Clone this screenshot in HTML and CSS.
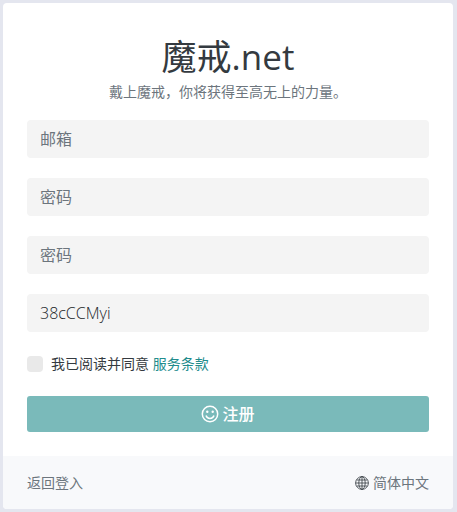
FILE: index.html
```html
<!DOCTYPE html>
<html lang="zh-CN">
<head>
<meta charset="utf-8">
<meta name="viewport" content="width=device-width, initial-scale=1">
<title>魔戒.net</title>
<link rel="stylesheet" href="styles.css">
</head>
<body>
<main class="card">
  <form class="card-body">
    <h1 class="brand">魔戒.net</h1>
    <p class="tagline">戴上魔戒，你将获得至高无上的力量。</p>
    <input class="field" type="email" placeholder="邮箱" aria-label="邮箱">
    <input class="field" type="password" placeholder="密码" aria-label="密码">
    <input class="field" type="password" placeholder="密码" aria-label="密码">
    <input class="field code" type="text" value="38cCCMyi" aria-label="38cCCMyi">
    <div class="terms">
      <input class="check" type="checkbox" id="terms">
      <label for="terms">我已阅读并同意 <a href="#">服务条款</a></label>
    </div>
    <button class="submit" type="submit">
      <svg class="icon" viewBox="0 0 18 18" aria-hidden="true"><circle cx="9" cy="9" r="7.7"/><path d="M5 10.5a4.2 4.2 0 0 0 8 0"/><circle class="eye" cx="6.3" cy="6.8" r="1.2"/><circle class="eye" cx="11.7" cy="6.8" r="1.2"/></svg>
      注册
    </button>
  </form>
  <footer class="card-footer">
    <a href="#">返回登入</a>
    <button class="language" type="button">
      <svg class="icon" viewBox="0 0 14 14" aria-hidden="true"><circle cx="7" cy="7" r="6.4"/><ellipse cx="7" cy="7" rx="3.2" ry="6.4"/><path d="M7 .6v12.8M.6 7h12.8M1.6 4h10.8M1.6 10h10.8"/></svg>
      简体中文
    </button>
  </footer>
</main>
</body>
</html>
```
FILE: styles.css
```css
* { box-sizing: border-box; }
body {
  margin: 0;
  padding: 3px 4px 3px 3px;
  background: #e4e6ef;
  color: #343a40;
  font: 14px/21px "Open Sans", "Noto Sans CJK SC", sans-serif;
}
a { color: inherit; text-decoration: none; }
button, input { font: inherit; margin: 0; border: 0; }
.card { background: #fff; border-radius: 4px; overflow: hidden; }
.card-body { padding: 32px 24px 24px; }
.brand {
  margin: 0;
  font-size: 35px;
  line-height: 44px;
  font-weight: 400;
  text-align: center;
}
.tagline { margin: 2px 0 18px; text-align: center; color: #6c757d; }
.field {
  display: block;
  width: 100%;
  height: 38px;
  margin-bottom: 20px;
  padding: 0 13px;
  border-radius: 4px;
  background: #f4f4f4;
  color: #495057;
  font-size: 16px;
}
.field::placeholder { color: #6c757d; opacity: 1; }
.code { font-weight: 300; color: #212529; }
.terms { display: flex; align-items: center; gap: 8px; margin: 21px 0 22px; }
.check { appearance: none; width: 16px; height: 16px; border-radius: 4px; background: #e9e9e9; }
.terms a { color: #218c8c; }
.submit {
  display: flex;
  align-items: center;
  justify-content: center;
  gap: 3px;
  width: 100%;
  height: 36px;
  padding: 0;
  border-radius: 3px;
  background: #7ababa;
  color: #fff;
  font-size: 16px;
  font-weight: 500;
}
.icon { fill: none; stroke: currentColor; }
.submit .icon { width: 18px; height: 18px; stroke-width: 1.5; }
.eye { fill: currentColor; stroke: none; }
.card-footer {
  display: flex;
  align-items: center;
  justify-content: space-between;
  padding: 16px 24px;
  background: #f8f9fb;
  color: #6c757d;
}
.language { display: flex; align-items: center; gap: 4px; padding: 0; background: none; color: inherit; }
.language .icon { width: 14px; height: 14px; color: #343a40; stroke-width: 0.8; }
```
